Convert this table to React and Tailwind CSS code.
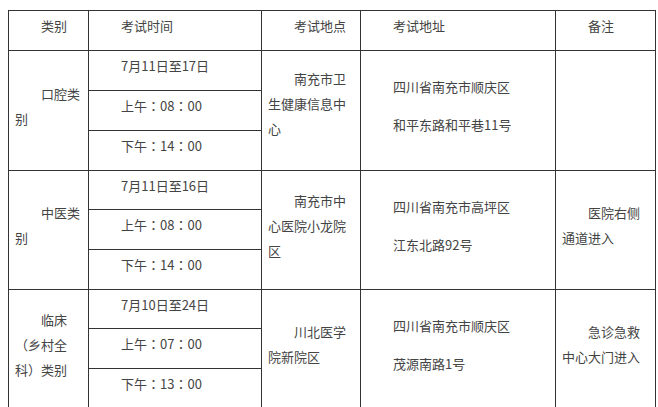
import React from "react";

function Cell({ lines = [], className = "" }) {
  return (
    <div
      className={`flex flex-col justify-center gap-[13px] border-r border-b border-[#333] px-[6px] pb-[10px] ${className}`}
    >
      {lines.map((t, i) => (
        <p key={i} className="indent-[2em] leading-[25px]">
          {t}
        </p>
      ))}
    </div>
  );
}

function Time({ label, h, m }) {
  return (
    <>
      {label}
      <span style={{ fontFamily: '"Noto Sans CJK TC", sans-serif' }}>：</span>
      {h}
      <span style={{ fontFamily: '"Noto Sans CJK TC", sans-serif' }}>：</span>
      {m}
    </>
  );
}

const groups = [
  {
    cat: "口腔类别",
    date: "7月11日至17日",
    am: "08",
    pm: "14",
    place: "南充市卫生健康信息中心",
    placeCls: "pb-[15px]",
    addr: ["四川省南充市顺庆区", "和平东路和平巷11号"],
    note: [],
  },
  {
    cat: "中医类别",
    date: "7月11日至16日",
    am: "08",
    pm: "14",
    place: "南充市中心医院小龙院区",
    placeCls: "",
    addr: ["四川省南充市高坪区", "江东北路92号"],
    note: ["医院右侧通道进入"],
  },
  {
    cat: "临床（乡村全科）类别",
    date: "7月10日至24日",
    am: "07",
    pm: "13",
    place: "川北医学院新院区",
    placeCls: "",
    addr: ["四川省南充市顺庆区", "茂源南路1号"],
    note: ["急诊急救中心大门进入"],
  },
];

export default function App() {
  return (
    <div className="h-[407px] w-[658px] overflow-hidden bg-white">
      <div
        className="ml-[8px] mt-[10px] grid w-[648px] grid-cols-[80px_173px_99px_195px_100px] grid-rows-[40px_40px_40px_40px_39px_40px_40px_39px_40px_40px] border-l border-t border-[#333] text-[13px] text-[#444]"
        style={{ fontFamily: '"Noto Sans CJK SC", "Noto Sans", sans-serif' }}
      >
        <Cell lines={["类别"]} />
        <Cell lines={["考试时间"]} />
        <Cell lines={["考试地点"]} />
        <Cell lines={["考试地址"]} />
        <Cell lines={["备注"]} />
        {groups.map((g, gi) => (
          <React.Fragment key={gi}>
            <Cell lines={[g.cat]} className="row-span-3" />
            <Cell lines={[g.date]} />
            <Cell lines={[g.place]} className={`row-span-3 ${g.placeCls}`} />
            <Cell lines={g.addr} className="row-span-3" />
            <Cell lines={g.note} className="row-span-3" />
            <Cell lines={[<Time label="上午" h={g.am} m="00" />]} className="col-start-2" />
            <Cell lines={[<Time label="下午" h={g.pm} m="00" />]} className="col-start-2" />
          </React.Fragment>
        ))}
      </div>
    </div>
  );
}
